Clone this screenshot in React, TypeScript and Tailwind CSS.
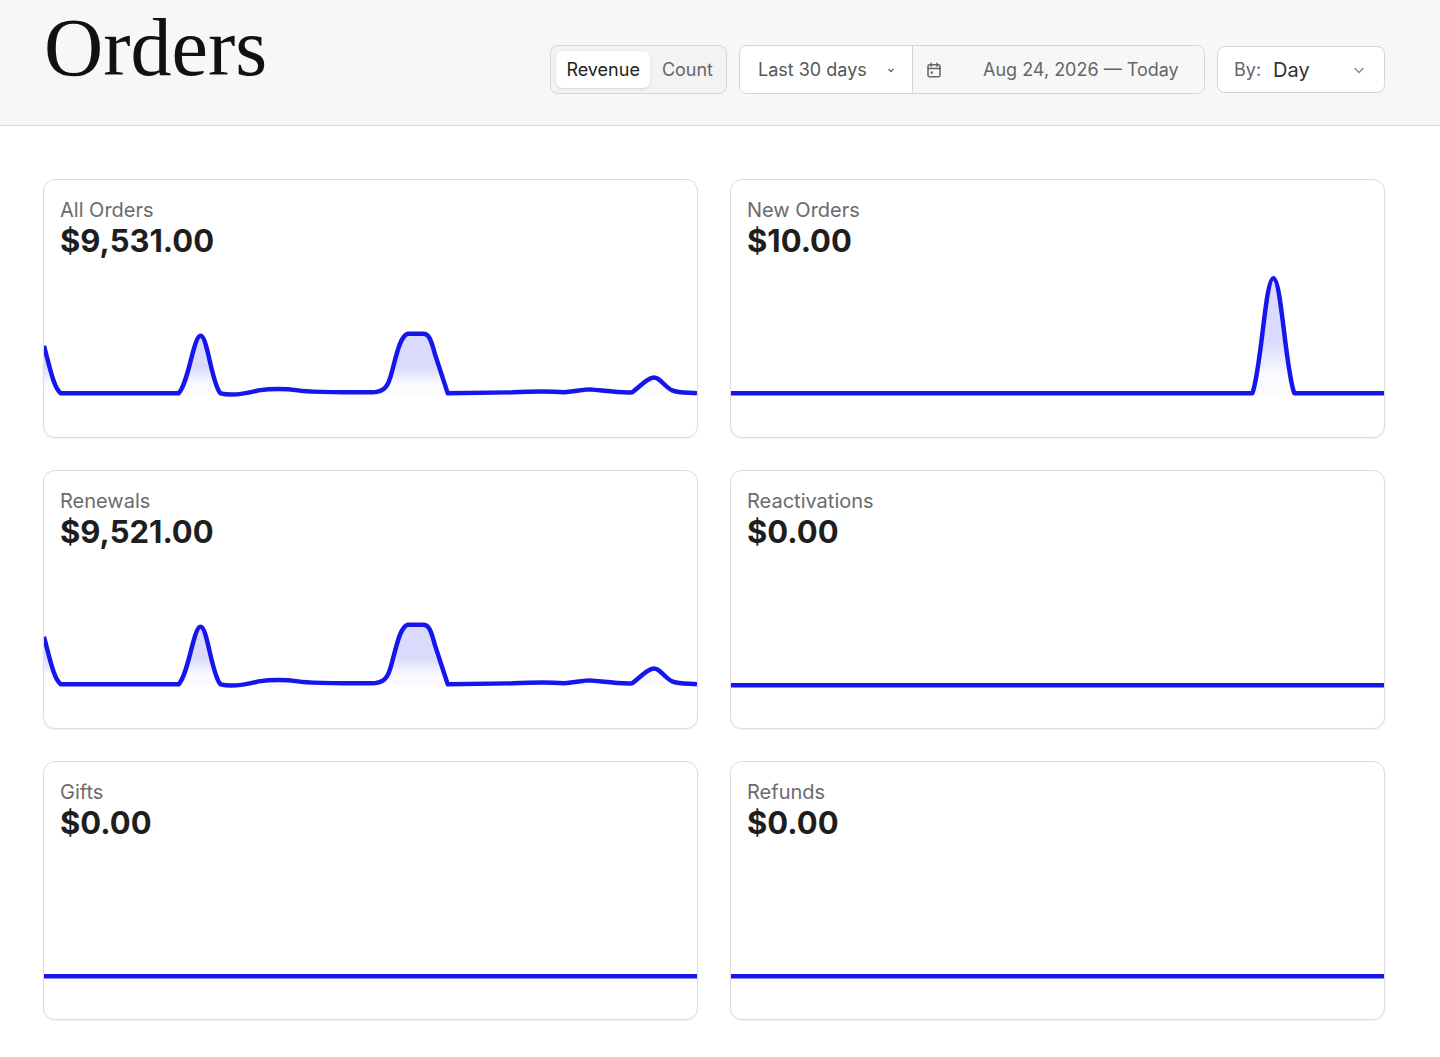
import React from "react";

const wavy =
  "M0,167 C6,190 10,210 17,215 L135,215 C145,205 150,157 157,157 C164,157 168,205 177,215 C185,217 200,216 215,212 C230,210 240,210 255,212 C265,214 300,214 330,214 C340,213 344,210 347,200 C352,185 356,157 365,155 L380,155 C386,155 388,160 392,175 L405,215 L470,214 C490,213 510,213 522,214 C535,213 540,211 548,211 C560,212 580,215 590,214 C600,206 606,199 612,199 C618,199 622,208 630,212 C638,215 648,214 655,215";
const spike = "M0,215 L523,215 C532,190 536,99 544,99 C552,99 556,190 565,215 L655,215";
const flat = "M0,216 L655,216";

function Card({ title, value, d, fill }: { title: string; value: string; d: string; fill?: boolean }) {
  return (
    <div className="relative h-[259px] rounded-xl border border-[#dcdcdc] bg-white shadow-[0_1px_2px_rgba(0,0,0,0.06)] overflow-hidden">
      <div className="relative z-10 px-4 pt-[18px]">
        <div className="text-[20px] leading-[24px] text-[#6b6b6b]">{title}</div>
        <div className="text-[31px] leading-[38px] font-bold text-[#1e1e1e]">{value}</div>
      </div>
      <svg className="absolute inset-0" width="100%" height="100%" viewBox="0 0 655 259" preserveAspectRatio="none">
        <defs>
          <linearGradient id="g" x1="0" y1="0" x2="0" y2="1">
            <stop offset="0.55" stopColor="#1a1aef" stopOpacity="0.16" />
            <stop offset="0.83" stopColor="#1a1aef" stopOpacity="0.02" />
          </linearGradient>
        </defs>
        {fill && <path d={d + " L655,216 L0,216 Z"} fill="url(#g)" />}
        <path d={d} fill="none" stroke="#1616ec" strokeWidth="4.5" strokeLinejoin="round" />
      </svg>
    </div>
  );
}

export default function App() {
  return (
    <div className="min-h-[1057px] bg-white" style={{ fontFamily: "Inter, 'Noto Sans', sans-serif" }}>
      <header className="h-[126px] bg-[#f7f7f7] border-b border-[#d9d9d9] flex items-start justify-between pl-[44px] pr-[55px]">
        <h1 className="mt-[0px] text-[82px] leading-[96px] text-[#111]" style={{ fontFamily: "'Liberation Serif', 'DejaVu Serif', serif" }}>Orders</h1>
        <div className="mt-[45px] flex items-center gap-[12px] text-[18px]">
          <div className="h-[49px] flex items-center gap-1 rounded-lg border border-[#d6d6d6] bg-[#f3f3f3] p-[5px]">
            <div className="h-full px-[10px] flex items-center rounded-md bg-white text-[#222] shadow-sm">Revenue</div>
            <div className="h-full px-[8px] flex items-center text-[#666]">Count</div>
          </div>
          <div className="h-[49px] flex items-center rounded-lg border border-[#d6d6d6] bg-white">
            <div className="w-[172px] h-full flex items-center justify-between pl-[18px] pr-[16px] text-[#555]">
              Last 30 days
              <svg width="10" height="10" viewBox="0 0 10 10" fill="none" stroke="#666" strokeWidth="1.3"><path d="M2.5 4 L5 6.5 L7.5 4" /></svg>
            </div>
            <div className="w-[292px] h-full flex items-center border-l border-[#d6d6d6] bg-[#f7f7f7] rounded-r-lg pl-[12px] text-[#666]">
              <svg width="18" height="18" viewBox="0 0 24 24" fill="none" stroke="#666" strokeWidth="2" strokeLinecap="round"><rect x="4" y="5" width="16" height="16" rx="2" /><path d="M8 3v4M16 3v4M4 10h16" /><rect x="7.5" y="14" width="3" height="3" fill="#666" stroke="none" /></svg>
              <span className="ml-[40px]">Aug 24, 2026 — Today</span>
            </div>
          </div>
          <div className="w-[168px] h-[47px] flex items-center rounded-lg border border-[#d6d6d6] bg-white pl-[16px] pr-[18px]">
            <span className="text-[#666]">By:</span>
            <span className="ml-[12px] text-[20px] text-[#333]">Day</span>
            <svg className="ml-auto" width="14" height="14" viewBox="0 0 14 14" fill="none" stroke="#888" strokeWidth="1.3"><path d="M2.5 5 L7 9.5 L11.5 5" /></svg>
          </div>
        </div>
      </header>
      <main className="pl-[43px] pr-[55px] pt-[53px] grid grid-cols-2 gap-[32px]">
        <Card title="All Orders" value="$9,531.00" d={wavy} fill />
        <Card title="New Orders" value="$10.00" d={spike} fill />
        <Card title="Renewals" value="$9,521.00" d={wavy} fill />
        <Card title="Reactivations" value="$0.00" d={flat} />
        <Card title="Gifts" value="$0.00" d={flat} />
        <Card title="Refunds" value="$0.00" d={flat} />
      </main>
    </div>
  );
}
